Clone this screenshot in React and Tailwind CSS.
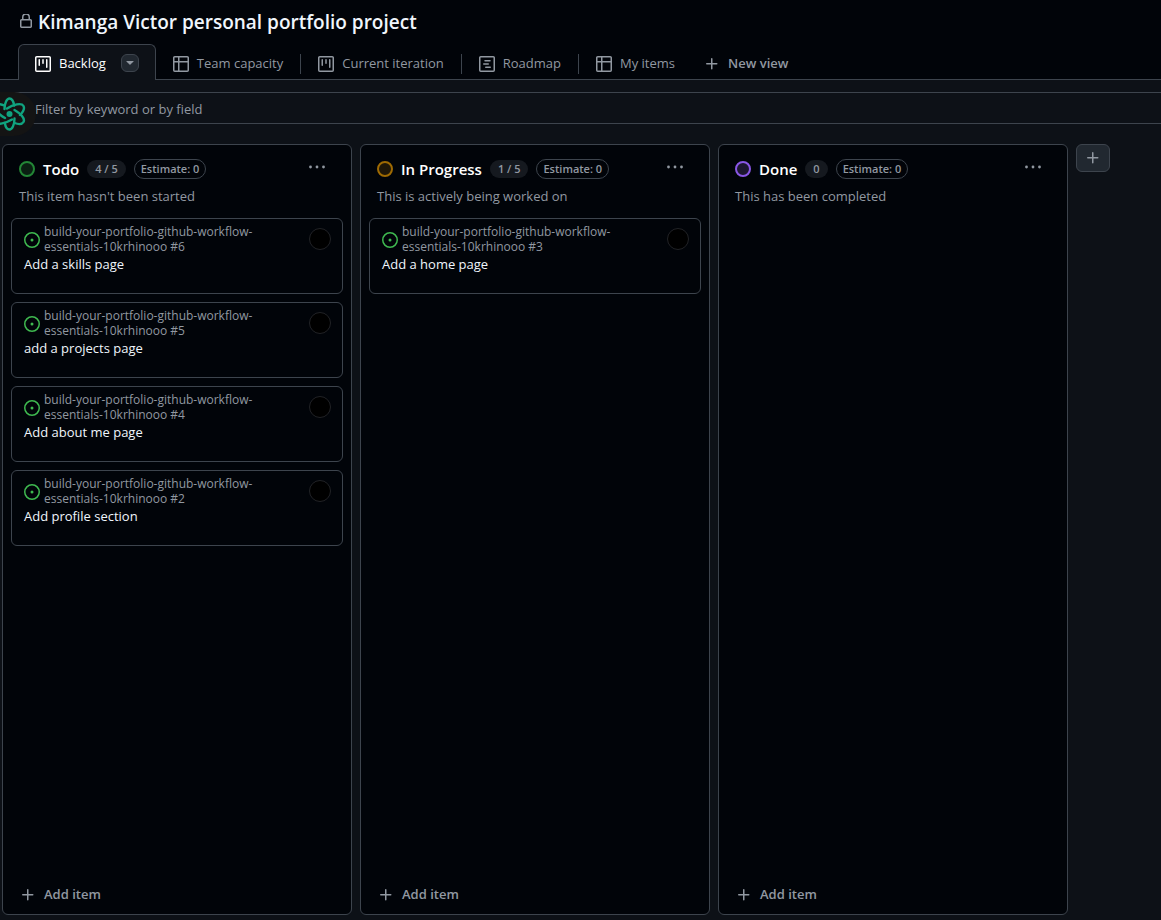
const REPO = "build-your-portfolio-github-workflow-essentials-10krhinooo";

const FRAME =
  "M1.750 0h12.500C15.216 0 16 .784 16 1.750v12.500A1.750 1.750 0 0 1 14.250 16H1.750A1.750 1.750 0 0 1 0 14.250V1.750C0 .784.784 0 1.750 0ZM1.500 1.750v12.500c0 .138.112.250.250.250h12.500a.250.250 0 0 0 .250-.250V1.750a.250.250 0 0 0-.250-.250H1.750a.250.250 0 0 0-.250.250Z";

function Svg({ children, className = "" }) {
  return (
    <svg aria-hidden="true" viewBox="0 0 16 16" width="16" height="16" fill="currentColor" className={"shrink-0 " + className}>
      {children}
    </svg>
  );
}

function BoardIcon() {
  return (
    <Svg>
      <path d={FRAME} />
      <path d="M4.250 3.750v5.500M8 3.750v3.500M11.750 3.750v7.500" fill="none" stroke="currentColor" strokeWidth="1.500" strokeLinecap="round" />
    </Svg>
  );
}

function TableIcon() {
  return (
    <Svg>
      <path d={FRAME} />
      <path d="M1 5.750h14M5.750 1v14" fill="none" stroke="currentColor" strokeWidth="1.500" />
    </Svg>
  );
}

function RoadmapIcon() {
  return (
    <Svg>
      <path d={FRAME} />
      <path d="M6 4.750h5M4.750 8h4.500M6.750 11.250h4.500" fill="none" stroke="currentColor" strokeWidth="1.500" strokeLinecap="round" />
    </Svg>
  );
}

function PlusIcon() {
  return (
    <Svg>
      <path d="M7.750 2a.75.75 0 0 1 .75.75V7h4.250a.75.75 0 0 1 0 1.500H8.500v4.250a.75.75 0 0 1-1.500 0V8.500H2.750a.75.75 0 0 1 0-1.500H7V2.750A.75.75 0 0 1 7.750 2Z" />
    </Svg>
  );
}

function LockIcon() {
  return (
    <Svg className="text-[#9198a1]">
      <path
        d="M4.750 6V3.250a3.250 3.250 0 0 1 6.500 0V6M3.500 5.750h9a.75.75 0 0 1 .75.75v6a.75.75 0 0 1-.75.75h-9a.75.75 0 0 1-.75-.75v-6a.75.75 0 0 1 .75-.75Z"
        fill="none"
        stroke="currentColor"
        strokeWidth="1.500"
      />
    </Svg>
  );
}

function IssueIcon() {
  return (
    <Svg className="mt-0.5 text-[#3fb950]">
      <circle cx="8" cy="8" r="1.500" />
      <circle cx="8" cy="8" r="7.250" fill="none" stroke="currentColor" strokeWidth="1.500" />
    </Svg>
  );
}

function MoreIcon() {
  return (
    <Svg>
      <circle cx="1.500" cy="8" r="1.400" />
      <circle cx="8" cy="8" r="1.400" />
      <circle cx="14.500" cy="8" r="1.400" />
    </Svg>
  );
}

function CaretIcon() {
  return (
    <Svg>
      <path d="m4.427 6.427 3.396 3.396a.250.250 0 0 0 .354 0l3.396-3.396A.250.250 0 0 0 11.396 6H4.604a.250.250 0 0 0-.177.427Z" />
    </Svg>
  );
}

const views = [
  { name: "Team capacity", Icon: TableIcon, divider: true },
  { name: "Current iteration", Icon: BoardIcon, divider: true },
  { name: "Roadmap", Icon: RoadmapIcon, divider: true },
  { name: "My items", Icon: TableIcon, divider: false },
];

const columns = [
  {
    name: "Todo",
    count: "4 / 5",
    dot: "border-[#238636] bg-[#0a1f12]",
    description: "This item hasn't been started",
    items: [
      { id: 6, title: "Add a skills page" },
      { id: 5, title: "add a projects page" },
      { id: 4, title: "Add about me page" },
      { id: 2, title: "Add profile section" },
    ],
  },
  {
    name: "In Progress",
    count: "1 / 5",
    dot: "border-[#9e6a03] bg-[#1f1708]",
    description: "This is actively being worked on",
    items: [{ id: 3, title: "Add a home page" }],
  },
  {
    name: "Done",
    count: "0",
    dot: "border-[#8957e5] bg-[#1d1730]",
    description: "This has been completed",
    items: [],
  },
];

function ViewTabs() {
  return (
    <nav aria-label="Views" className="flex h-9 items-end border-b border-[#3d444d] pl-[18px] whitespace-nowrap">
      <div className="-mb-px flex h-9 items-center rounded-t-md border border-b-0 border-[#3d444d] bg-[#0d1117] px-4 text-white">
        <a href="#backlog" aria-current="page" className="flex items-center gap-2 pt-0.5">
          <BoardIcon />
          Backlog
        </a>
        <button
          type="button"
          aria-label="View options"
          className="ml-[15px] flex size-[18px] items-center justify-center rounded-md border border-[#3d444d] bg-[#212830] text-[#9198a1]"
        >
          <CaretIcon />
        </button>
      </div>
      {views.map(({ name, Icon, divider }) => (
        <div key={name} className="-mb-px flex h-9 items-center pt-[3px]">
          <a href={"#" + name.toLowerCase().replace(" ", "-")} className="flex items-center gap-2 px-[17px]">
            <Icon />
            {name}
          </a>
          {divider && <span className="h-5 w-px bg-[#3d444d]" />}
        </div>
      ))}
      <button type="button" className="-mb-px ml-3 flex h-9 items-center gap-2 pt-[3px] font-semibold">
        <PlusIcon />
        New view
      </button>
    </nav>
  );
}

function AssistantBadge() {
  return (
    <button
      type="button"
      aria-label="Assistant"
      className="absolute top-0 left-0 flex h-11 w-9 items-center rounded-r-full bg-[#141414]"
    >
      <svg viewBox="0 0 26 36" width="26" height="36" fill="none" stroke="#10a37f" strokeWidth="2.400" strokeLinecap="round">
        <circle cx="9.500" cy="18" r="3" fill="#10a37f" stroke="none" />
        <path d="M4.500 13 C4.500 7 7 2.500 9.500 2.500 C11.800 2.500 13.500 5.500 14.200 9.500" />
        <path d="M14.500 22.500 C14.500 29 12 33.500 9.500 33.500 C7.200 33.500 5.500 31 4.800 27" />
        <path d="M7 12.500 C13 8.500 21.500 6.500 23.500 10 C24.800 12.500 23 16 20 19" />
        <path d="M12 23.500 C6 27 -2.500 29.500 -4.500 26" />
        <path d="M14.500 14 C20.500 17.500 25.500 22.500 23.500 26 C22 28.500 18.500 28.500 14.500 27" />
        <path d="M5 22 C-1 18.500 -6.500 13.500 -4.500 10 C-3 7.500 1 8 4.500 9.500" />
      </svg>
    </button>
  );
}

function Card({ id, title }) {
  return (
    <li className="flex h-[76px] flex-col rounded-md border border-[#3d444d] px-3 py-[5px]">
      <div className="flex items-start justify-between">
        <div className="flex items-center gap-1">
          <IssueIcon />
          <span className="max-w-[212px] text-[12px] leading-[15px] text-[#9198a1]">{`${REPO} #${id}`}</span>
        </div>
        <span className="mt-1 -mr-px size-[22px] rounded-full border border-[#212226] bg-black" />
      </div>
      <a href={"#" + id} className="leading-5 text-[#f0f6fc]">
        {title}
      </a>
    </li>
  );
}

function Column({ name, count, dot, description, items }) {
  return (
    <section className="flex w-[350px] shrink-0 flex-col rounded-md border border-[#3d444d] bg-[#010409]">
      <header className="flex h-[73px] flex-col px-4 pt-[14px]">
        <div className="flex items-center">
          <span className={"size-4 rounded-full border-2 " + dot} />
          <h2 className="ml-2 text-[15px] leading-5 font-semibold text-white">{name}</h2>
          <span className="ml-2 rounded-full bg-[#15191f] px-2 text-[11px] leading-[18px] font-semibold">
            {count}
          </span>
          <span className="ml-2 rounded-full border border-[#3d444d] px-[6px] text-[11px] leading-[18px] font-semibold">
            Estimate: 0
          </span>
          <button type="button" aria-label={"Actions for " + name} className="mr-[10px] mb-1 ml-auto">
            <MoreIcon />
          </button>
        </div>
        <p className="mt-[7px] leading-5">{description}</p>
      </header>
      <ul className="flex flex-1 flex-col gap-2 px-2">
        {items.map((item) => (
          <Card key={item.id} {...item} />
        ))}
      </ul>
      <button type="button" className="flex h-10 items-center gap-2 px-[17px] pt-px font-semibold">
        <PlusIcon />
        Add item
      </button>
    </section>
  );
}

export default function App() {
  return (
    <div className="flex min-h-screen flex-col overflow-hidden bg-[#0d1117] font-['Open_Sans','Noto_Sans',sans-serif] text-[13px] text-[#9198a1]">
      <div className="bg-[#010409]">
        <h1 className="flex h-11 items-center gap-1 pl-[18px] text-[19px] font-semibold text-[#f0f6fc]">
          <LockIcon />
          Kimanga Victor personal portfolio project
        </h1>
        <ViewTabs />
      </div>
      <div className="relative mt-3 flex">
        <input
          type="text"
          aria-label="Filter by keyword or by field"
          placeholder="Filter by keyword or by field"
          className="h-8 flex-1 border-y border-[#3d444d] bg-transparent pt-0.5 pl-[35px] outline-none placeholder:text-[#9198a1]"
        />
        <AssistantBadge />
      </div>
      <main className="flex flex-1 gap-2 px-0.5 pt-5 pb-[5px]">
        {columns.map((column) => (
          <Column key={column.name} {...column} />
        ))}
        <button
          type="button"
          aria-label="Add column"
          className="flex h-7 w-[34px] shrink-0 items-center justify-center rounded-md border border-[#3d444d] bg-[#212830]"
        >
          <PlusIcon />
        </button>
      </main>
    </div>
  );
}
